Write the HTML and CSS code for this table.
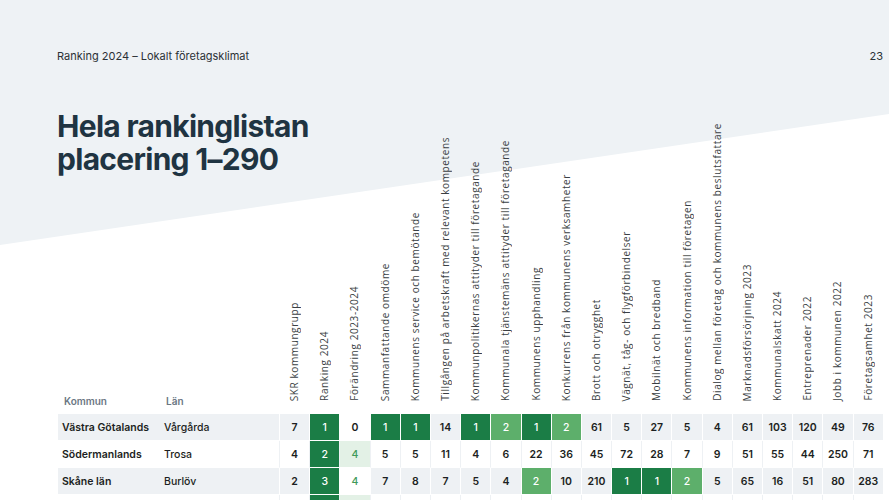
FILE: index.html
```html
<!DOCTYPE html>
<html lang="sv">
<head>
  <meta charset="UTF-8" />
  <meta name="viewport" content="width=device-width, initial-scale=1.0"/>
  <title>Hela rankinglistan</title>
  <link rel="stylesheet" href="styles.css">
</head>
<body>

  <div class="page">
    <div class="topbar">
      <span>Ranking 2024 – Lokalt företagsklimat</span>
      <span>23</span>
    </div>

    <div class="content">
      <h1 class="title">Hela rankinglistan<br>placering 1–290</h1>

      <table class="ranking">
        <colgroup>
          <col class="c-kommun">
          <col class="c-lan">
        </colgroup>
        <thead>
          <tr>
            <th class="th-text">Kommun</th>
            <th class="th-text">Län</th>
            <th><span>SKR kommungrupp</span></th>
            <th><span>Ranking 2024</span></th>
            <th><span>Förändring 2023-2024</span></th>
            <th><span>Sammanfattande omdöme</span></th>
            <th><span>Kommunens service och bemötande</span></th>
            <th><span>Tillgången på arbetskraft med relevant kompetens</span></th>
            <th><span>Kommunpolitikernas attityder till företagande</span></th>
            <th><span>Kommunala tjänstemäns attityder till företagande</span></th>
            <th><span>Kommunens upphandling</span></th>
            <th><span>Konkurrens från kommunens verksamheter</span></th>
            <th><span>Brott och otrygghet</span></th>
            <th><span>Vägnät, tåg- och flygförbindelser</span></th>
            <th><span>Mobilnät och bredband</span></th>
            <th><span>Kommunens information till företagen</span></th>
            <th><span>Dialog mellan företag och kommunens beslutsfattare</span></th>
            <th><span>Marknadsförsörjning 2023</span></th>
            <th><span>Kommunalskatt 2024</span></th>
            <th><span>Entreprenader 2022</span></th>
            <th><span>Jobb i kommunen 2022</span></th>
            <th><span>Företagsamhet 2023</span></th>
          </tr>
        </thead>
        <tbody>
          <tr class="grey">
            <td class="kommun">Västra Götalands</td>
            <td class="lan">Vårgårda</td>
            <td>7</td><td class="dark">1</td><td class="chg">0</td>
            <td class="dark">1</td><td class="dark">1</td><td>14</td>
            <td class="dark">1</td><td class="mid">2</td><td class="dark">1</td><td class="mid">2</td>
            <td>61</td><td>5</td><td>27</td><td>5</td><td>4</td>
            <td>61</td><td>103</td><td>120</td><td>49</td><td>76</td>
          </tr>
          <tr>
            <td class="kommun">Södermanlands</td>
            <td class="lan">Trosa</td>
            <td>4</td><td class="dark">2</td><td class="chg up">4</td>
            <td>5</td><td>5</td><td>11</td>
            <td>4</td><td>6</td><td>22</td><td>36</td>
            <td>45</td><td>72</td><td>28</td><td>7</td><td>9</td>
            <td>51</td><td>55</td><td>44</td><td>250</td><td>71</td>
          </tr>
          <tr class="grey">
            <td class="kommun">Skåne län</td>
            <td class="lan">Burlöv</td>
            <td>2</td><td class="dark">3</td><td class="chg up">4</td>
            <td>7</td><td>8</td><td>7</td>
            <td>5</td><td>4</td><td class="mid">2</td><td>10</td>
            <td>210</td><td class="dark">1</td><td class="dark">1</td><td class="mid">2</td><td>5</td>
            <td>65</td><td>16</td><td>51</td><td>80</td><td>283</td>
          </tr>
          <tr>
            <td class="kommun">Stockholms</td>
            <td class="lan">Danderyd</td>
            <td>3</td><td class="dark">4</td><td class="chg up">2</td>
            <td>3</td><td>4</td><td>9</td>
            <td>3</td><td>5</td><td>8</td><td>12</td>
            <td>30</td><td>6</td><td>4</td><td>10</td><td>6</td>
            <td>20</td><td>33</td><td>60</td><td>12</td><td>40</td>
          </tr>
        </tbody>
      </table>
    </div>
  </div>

</body>
</html>
```

FILE: styles.css
```css
body {
  margin: 0;
  font-family: Inter, "Noto Sans", sans-serif;
  background: #fff;
}

.page {
  position: relative;
  width: 889px;
  height: 500px;
  overflow: hidden;
}

/* grey diagonal backdrop */
.page::before {
  content: "";
  position: absolute;
  top: 0;
  left: 0;
  right: 0;
  bottom: 0;
  background: #eef2f5;
  clip-path: polygon(0 0, 100% 0, 100% 114px, 0 245px);
}

.topbar {
  position: relative;
  display: flex;
  justify-content: space-between;
  padding: 48px 6px 0 57px;
  font-size: 11px;
  line-height: 16px;
  color: #2b3136;
}

.content {
  position: relative;
  display: grid;
  margin-top: 46px;
  padding-left: 57px;
}

.title,
.ranking {
  grid-area: 1 / 1;
}

.title {
  margin: 0;
  align-self: start;
  font-size: 30px;
  line-height: 33px;
  font-weight: 700;
  letter-spacing: -0.7px;
  color: #1f3442;
  z-index: 1;
}

.ranking {
  margin-left: 1px;
  width: 825px;
  table-layout: fixed;
  border-collapse: separate;
  border-spacing: 0;
}

.c-kommun {
  width: 102px;
}

.c-lan {
  width: 119px;
}

th {
  height: 295px;
  padding: 0 0 9px 0;
  vertical-align: bottom;
  font-weight: 400;
}

th span {
  display: inline-block;
  writing-mode: vertical-rl;
  transform: rotate(180deg);
  font-family: "Open Sans", sans-serif;
  font-size: 10px;
  line-height: 12px;
  letter-spacing: 0.6px;
  color: #3a3f44;
  white-space: nowrap;
}

.th-text {
  text-align: left;
  padding: 0 0 7px 6px;
  font-size: 10px;
  font-weight: 600;
  color: #6b7783;
}

td {
  height: 26px;
  padding: 0;
  text-align: center;
  font-size: 10.5px;
  font-weight: 600;
  color: #1c1f22;
  border-bottom: 1px solid #fff;
  border-left: 1px solid #eef1f4;
}

tr.grey td {
  background: #eef1f4;
  border-left-color: #fff;
}

td.kommun,
td.lan {
  text-align: left;
  padding-left: 4px;
  border-left: none;
}

td.lan {
  font-weight: 500;
}

tr.grey td.chg {
  background: #fff;
}

tr td.up {
  background: #e3f1e6;
  color: #3f9a5a;
  font-weight: 500;
}

tr td.dark {
  background: #1b7d46;
  color: #fff;
  font-weight: 500;
}

tr td.mid {
  background: #5daf6b;
  color: #fff;
  font-weight: 500;
}
```
